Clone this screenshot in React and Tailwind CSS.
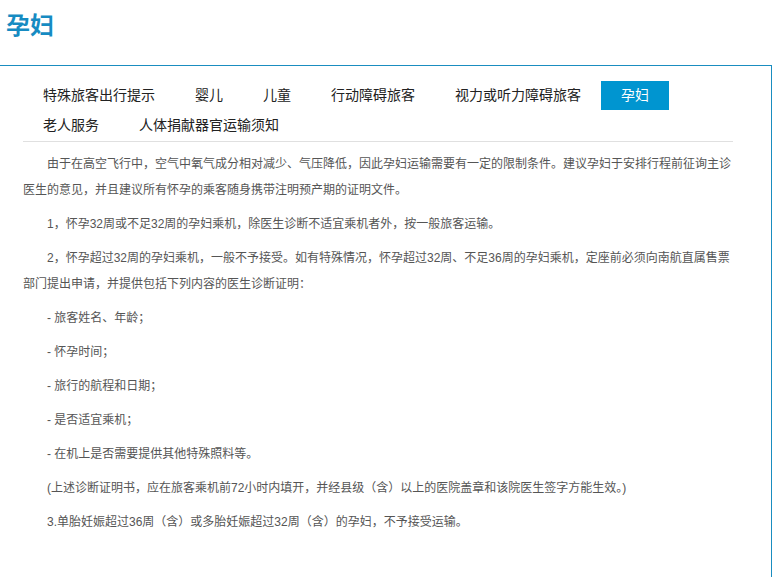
const tabs = ["特殊旅客出行提示", "婴儿", "儿童", "行动障碍旅客", "视力或听力障碍旅客", "孕妇", "老人服务", "人体捐献器官运输须知"];

const paras = [
  "由于在高空飞行中，空气中氧气成分相对减少、气压降低，因此孕妇运输需要有一定的限制条件。建议孕妇于安排行程前征询主诊医生的意见，并且建议所有怀孕的乘客随身携带注明预产期的证明文件。",
  "1，怀孕32周或不足32周的孕妇乘机，除医生诊断不适宜乘机者外，按一般旅客运输。",
  "2，怀孕超过32周的孕妇乘机，一般不予接受。如有特殊情况，怀孕超过32周、不足36周的孕妇乘机，定座前必须向南航直属售票部门提出申请，并提供包括下列内容的医生诊断证明：",
  "- 旅客姓名、年龄；",
  "- 怀孕时间；",
  "- 旅行的航程和日期；",
  "- 是否适宜乘机；",
  "- 在机上是否需要提供其他特殊照料等。",
  "(上述诊断证明书，应在旅客乘机前72小时内填开，并经县级（含）以上的医院盖章和该院医生签字方能生效。)",
  "3.单胎妊娠超过36周（含）或多胎妊娠超过32周（含）的孕妇，不予接受运输。",
];

export default function App() {
  return (
    <div className="w-[775px] h-[577px] bg-white overflow-hidden" style={{ fontFamily: '"Liberation Sans", "Noto Sans CJK SC", sans-serif' }}>
      <h1 className="h-[65px] pl-[6px] pt-[10px] text-[24px] font-bold text-[#168bc2] leading-[32px]">孕妇</h1>
      <div className="w-[772px] h-[512px] border-t border-r border-[#1a8dc0] px-[23px] pt-[15px]">
        <div className="w-[710px] flex flex-wrap gap-y-px border-b border-[#e0e0e0] pb-px">
          {tabs.map((t) => (
            <div key={t} className={`h-[29px] px-[20px] text-[14px] leading-[29px] ${t === "孕妇" ? "bg-[#0095d0] text-white" : "text-[#222]"}`}>{t}</div>
          ))}
        </div>
        <div className="w-[712px] pt-[9px] text-[12px] leading-[26px] text-[#555]">
          {paras.map((p, i) => (
            <p key={i} className="mb-[8px] indent-[24px]">{p}</p>
          ))}
        </div>
      </div>
    </div>
  );
}
